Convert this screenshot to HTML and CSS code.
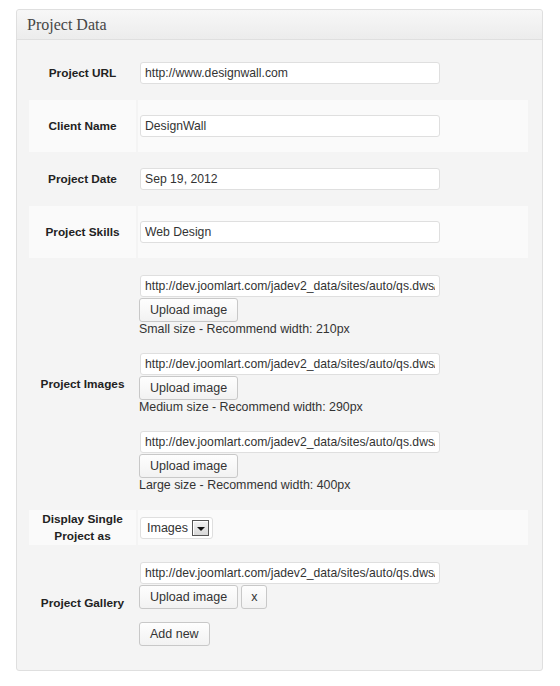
FILE: index.html
```html
<!DOCTYPE html>
<html>
<head>
<meta charset="utf-8">
<title>Project Data</title>
<link rel="stylesheet" href="styles.css">
</head>
<body>
<div class="postbox">
  <h3 class="postbox-title">Project Data</h3>
  <div class="postbox-inside">
    <table class="form-table">
      <tr>
        <th class="label">Project URL</th>
        <td class="field"><input class="text" type="text" value="http://www.designwall.com"></td>
      </tr>
      <tr class="alt">
        <th class="label">Client Name</th>
        <td class="field"><input class="text" type="text" value="DesignWall"></td>
      </tr>
      <tr>
        <th class="label">Project Date</th>
        <td class="field"><input class="text" type="text" value="Sep 19, 2012"></td>
      </tr>
      <tr class="alt">
        <th class="label">Project Skills</th>
        <td class="field"><input class="text" type="text" value="Web Design"></td>
      </tr>
      <tr>
        <th class="label">Project Images</th>
        <td class="field images">
          <div class="img-field">
            <input class="text" type="text" value="http://dev.joomlart.com/jadev2_data/sites/auto/qs.dws/images/small.jpg">
            <button class="button">Upload image</button>
            <span class="desc">Small size - Recommend width: 210px</span>
          </div>
          <div class="img-field">
            <input class="text" type="text" value="http://dev.joomlart.com/jadev2_data/sites/auto/qs.dws/images/medium.jpg">
            <button class="button">Upload image</button>
            <span class="desc">Medium size - Recommend width: 290px</span>
          </div>
          <div class="img-field">
            <input class="text" type="text" value="http://dev.joomlart.com/jadev2_data/sites/auto/qs.dws/images/large.jpg">
            <button class="button">Upload image</button>
            <span class="desc">Large size - Recommend width: 400px</span>
          </div>
        </td>
      </tr>
      <tr class="alt compact">
        <th class="label">Display Single Project as</th>
        <td class="field">
          <div class="select">
            <span class="select-value">Images</span>
            <span class="select-arrow"><span class="tri"></span></span>
          </div>
        </td>
      </tr>
      <tr>
        <th class="label">Project Gallery</th>
        <td class="field gallery">
          <input class="text" type="text" value="http://dev.joomlart.com/jadev2_data/sites/auto/qs.dws/images/gallery1.jpg">
          <div class="gallery-actions">
            <button class="button">Upload image</button>
            <button class="button small">x</button>
          </div>
          <button class="button add">Add new</button>
        </td>
      </tr>
    </table>
  </div>
</div>
</body>
</html>
```
FILE: styles.css
```css
html, body {
  margin: 0;
  padding: 0;
  background: #ffffff;
}

body {
  font-family: "Liberation Sans", Arial, sans-serif;
  color: #333333;
}

.postbox {
  width: 525px;
  margin: 9px 0 0 16px;
  border: 1px solid #dfdfdf;
  border-radius: 3px;
  background: #f4f4f4;
}

.postbox-title {
  margin: 0;
  height: 29px;
  padding: 0 10px;
  font-family: "Liberation Serif", Georgia, serif;
  font-weight: normal;
  font-size: 16px;
  line-height: 29px;
  color: #464646;
  background: linear-gradient(#f7f7f7, #ececec);
  border-bottom: 1px solid #dfdfdf;
  border-radius: 3px 3px 0 0;
}

.postbox-inside {
  padding: 6px 12px 8px 10px;
}

.form-table {
  width: 100%;
  border-collapse: separate;
  border-spacing: 2px 1px;
}

.label {
  width: 87px;
  padding: 15px 10px;
  font-size: 11.8px;
  font-weight: bold;
  color: #222222;
  text-align: center;
  vertical-align: middle;
  line-height: 17px;
}

.field {
  padding: 15px 2px;
  vertical-align: middle;
  line-height: 16px;
}

.alt .label,
.alt .field {
  background: #fafafa;
}

.compact .label {
  padding: 1px 10px 0;
}

.compact .field {
  padding: 0 2px;
}

.text {
  display: block;
  box-sizing: border-box;
  width: 300px;
  height: 22px;
  margin: 0;
  padding: 0 4px;
  border: 1px solid #dfdfdf;
  border-radius: 3px;
  background: #ffffff;
  font-family: "Liberation Sans", Arial, sans-serif;
  font-size: 12.2px;
  color: #333333;
  outline: none;
}

.images {
  padding-top: 16px;
  padding-bottom: 16px;
}

.img-field {
  display: flex;
  flex-direction: column;
  align-items: flex-start;
  margin-bottom: 16px;
}

.img-field:last-child {
  margin-bottom: 0;
}

.button {
  box-sizing: border-box;
  height: 24px;
  margin: 1px 0 0 -1px;
  padding: 0 10px;
  border: 1px solid #c8c8c8;
  border-radius: 3px;
  background: linear-gradient(#fefefe, #f2f2f2);
  font-family: "Liberation Sans", Arial, sans-serif;
  font-size: 12.5px;
  color: #333333;
  line-height: 22px;
}

.desc {
  display: block;
  margin-left: -1px;
  font-size: 12.4px;
  line-height: 15px;
  color: #333333;
}

.select {
  display: inline-flex;
  align-items: center;
  box-sizing: border-box;
  width: 73px;
  height: 22px;
  padding: 0 3px 0 6px;
  border: 1px solid #dfdfdf;
  border-radius: 3px;
  background: #ffffff;
  font-size: 12.5px;
  color: #333333;
}

.select-value {
  flex: 1;
}

.select-arrow {
  box-sizing: border-box;
  display: flex;
  align-items: center;
  justify-content: center;
  width: 17px;
  height: 16px;
  border: 1px solid #555555;
  background: linear-gradient(#f2f2f2, #d8d8d8);
  box-shadow: inset 1px 1px 0 #ffffff;
}

.tri {
  width: 0;
  height: 0;
  margin-top: 2px;
  border-left: 4px solid transparent;
  border-right: 4px solid transparent;
  border-top: 4px solid #111111;
}

.gallery {
  padding-top: 16px;
  padding-bottom: 15px;
}

.gallery-actions {
  display: flex;
  gap: 3px;
}

.button.small {
  padding: 0 9px;
  margin-left: 0;
}

.button.add {
  display: block;
  margin-top: 13px;
}
```
